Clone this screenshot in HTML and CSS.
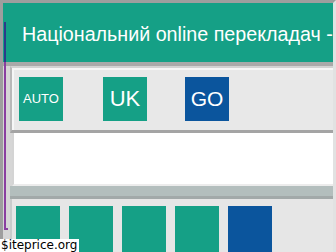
FILE: index.html
```html
<!DOCTYPE html>
<html>
<head>
	<meta charset="utf-8" />
	<title>Національний online перекладач</title>
	<link rel="stylesheet" href="styles.css">
</head>
<body>
	<div class="frame">
		<div class="header">Національний online перекладач -</div>
		<div class="main">
			<div class="langbar">
				<div class="btn btn-auto">AUTO</div>
				<div class="btn btn-uk">UK</div>
				<div class="btn btn-go">GO</div>
			</div>
			<div class="inputbox"></div>
			<div class="band"></div>
			<div class="tiles">
				<div class="tile"></div>
				<div class="tile"></div>
				<div class="tile"></div>
				<div class="tile"></div>
				<div class="tile tile-blue"></div>
			</div>
		</div>
		<div class="sideline"></div>
	</div>
	<div class="mark">$iteprice.org</div>
</body>
</html>
```
FILE: styles.css
```css
*{
	padding: 0px;
	margin: 0px;
	box-sizing: border-box;
}
body{
	width: 336px;
	height: 252px;
	overflow: hidden;
	background: #dcdcdc;
	font-family: "Liberation Sans", Arial, sans-serif;
}
.frame{
	position: relative;
	height: 252px;
	border-top: 3px solid #9e9e9e;
	border-left: 3px solid #9e9e9e;
	border-right: 3px solid #e2e2e2;
}
.header{
	height: 59px;
	padding-left: 19px;
	background: #15a086;
	color: #fff;
	font-size: 19.7px;
	line-height: 62px;
	white-space: nowrap;
	overflow: hidden;
}
.main{
	padding-left: 7px;
	background: #d6d6d6;
	border-top: 4px solid #a9a9a9;
}
.langbar{
	display: flex;
	align-items: center;
	height: 67px;
	padding: 0 0 1px 7px;
	background: #e8e8e8;
	border-left: 2px solid #b9b9b9;
	border-top: 2px solid #d2d2d2;
	border-bottom: 3px solid #a4a4a4;
	box-shadow: inset 2px 2px 0 #f6f6f6;
}
.btn{
	width: 44px;
	height: 44px;
	display: flex;
	align-items: center;
	justify-content: center;
	color: #fff;
	background: #15a086;
	font-size: 22px;
}
.btn-auto{
	font-size: 13px;
}
.btn-uk{
	margin-left: 40px;
}
.btn-go{
	margin-left: 38px;
	background: #0b559d;
	font-size: 21px;
}
.inputbox{
	height: 53px;
	margin-left: 2px;
	background: #fff;
	border-left: 2px solid #d4d4d4;
	border-bottom: 2px solid #ececec;
}
.band{
	height: 13px;
	background: #b3bebd;
	border-bottom: 3px solid #a2a9a9;
}
.tiles{
	display: flex;
	gap: 9px;
	height: 60px;
	padding: 7px 0 0 4px;
	background: #e6e6e6;
	border-left: 2px solid #c9cccc;
}
.tile{
	width: 44px;
	height: 52px;
	background: #15a086;
}
.tile-blue{
	background: #0b559d;
}
.sideline{
	position: absolute;
	left: 1px;
	top: 19px;
	width: 4px;
	height: 208px;
	border-left: 2px solid #8a3ea0;
	border-bottom: 2px solid #8a3ea0;
}
.sideline::before{
	content: "";
	position: absolute;
	left: -2px;
	top: 0;
	width: 2px;
	height: 40px;
	background: #2d3a8a;
}
.mark{
	position: absolute;
	left: 0;
	top: 239px;
	height: 13px;
	padding: 0 2px 0 1px;
	background: #fff;
	color: #000;
	font-family: "DejaVu Sans", sans-serif;
	font-size: 12px;
	line-height: 13px;
}
```
